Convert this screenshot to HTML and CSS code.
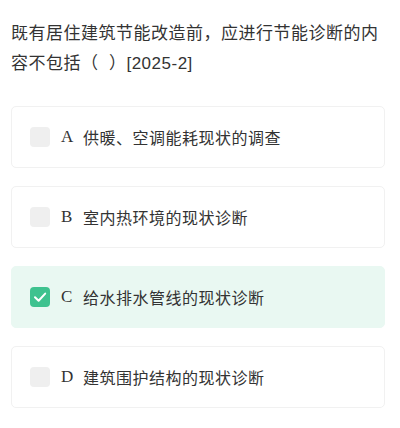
FILE: index.html
```html
<!DOCTYPE html>
<html lang="zh-CN">
<head>
<meta charset="utf-8">
<link rel="stylesheet" href="styles.css">
</head>
<body>
<div class="page">
  <div class="question">既有居住建筑节能改造前，应进行节能诊断的内容不包括（  ）[2025-2]</div>
  <div class="options">
    <div class="option">
      <span class="box"></span>
      <span class="letter">A</span>
      <span class="text">供暖、空调能耗现状的调查</span>
    </div>
    <div class="option">
      <span class="box"></span>
      <span class="letter">B</span>
      <span class="text">室内热环境的现状诊断</span>
    </div>
    <div class="option selected">
      <span class="box">
        <svg viewBox="0 0 20 20" width="20" height="20"><path d="M5 10.3 L8.6 13.8 L15.2 6.6" fill="none" stroke="#fff" stroke-width="2" stroke-linecap="round" stroke-linejoin="round"/></svg>
      </span>
      <span class="letter">C</span>
      <span class="text">给水排水管线的现状诊断</span>
    </div>
    <div class="option">
      <span class="box"></span>
      <span class="letter">D</span>
      <span class="text">建筑围护结构的现状诊断</span>
    </div>
  </div>
</div>
</body>
</html>
```
FILE: styles.css
```css
html, body {
  margin: 0;
  padding: 0;
  background: #ffffff;
}
.page {
  padding: 19px 15px 0 11px;
  font-family: "Liberation Sans", "Noto Sans CJK SC", sans-serif;
  color: #333333;
}
.question {
  font-size: 17px;
  letter-spacing: 0.5px;
  line-height: 30px;
  white-space: pre-wrap;
  text-spacing-trim: space-all;
}
.options {
  margin-top: 27px;
  display: flex;
  flex-direction: column;
  gap: 18px;
}
.option {
  height: 62px;
  box-sizing: border-box;
  border: 1px solid #f1f1f1;
  border-radius: 5px;
  display: flex;
  align-items: center;
  padding: 0 18px;
  background: #ffffff;
}
.option.selected {
  background: #e9f8f2;
  border-color: #e9f8f2;
}
.box {
  width: 20px;
  height: 20px;
  border-radius: 4px;
  background: #efefef;
  flex: none;
  display: flex;
}
.selected .box {
  background: #3ec28f;
}
.letter {
  font-family: "Liberation Serif", "DejaVu Serif", serif;
  font-size: 17px;
  margin-left: 11px;
  width: 22px;
  color: #333;
}
.text {
  font-family: "Noto Sans CJK SC", sans-serif;
  font-size: 16px;
  letter-spacing: 0.5px;
  color: #333;
}
```
